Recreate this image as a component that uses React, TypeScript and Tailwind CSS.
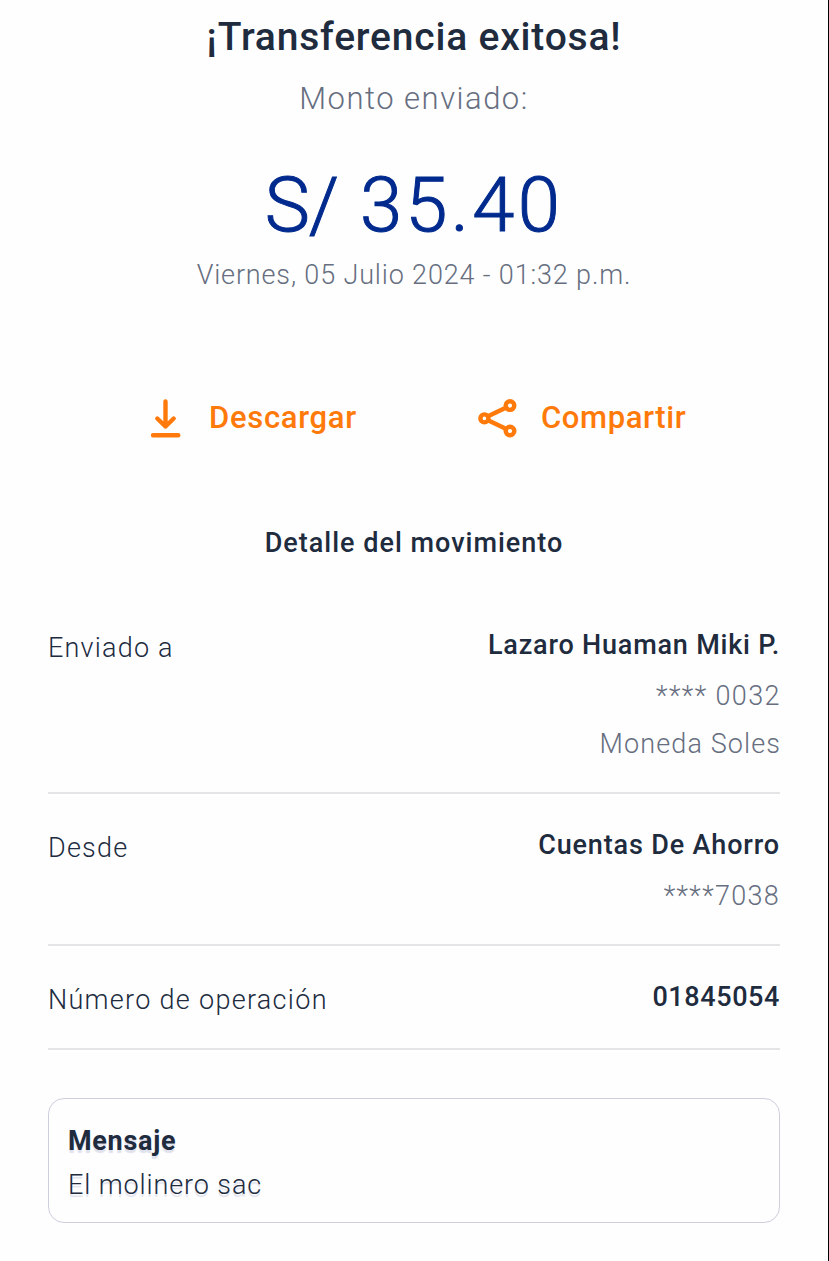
import React from "react";

type Line = { text: string; className: string };

type Row = {
  label: string;
  labelClass: string;
  value: string;
  valueClass: string;
  lines: Line[];
};

const ROWS: Row[] = [
  {
    label: "Enviado a",
    labelClass: "tracking-[1.2px]",
    value: "Lazaro Huaman Miki P.",
    valueClass: "tracking-[0.8px]",
    lines: [
      { text: "**** 0032", className: "tracking-[1.4px] -mr-px" },
      { text: "Moneda Soles", className: "tracking-[1.1px] -mr-px" },
    ],
  },
  {
    label: "Desde",
    labelClass: "tracking-[1.2px]",
    value: "Cuentas De Ahorro",
    valueClass: "tracking-[0.85px]",
    lines: [{ text: "****7038", className: "tracking-[1.3px]" }],
  },
  {
    label: "Número de operación",
    labelClass: "tracking-[1.3px]",
    value: "01845054",
    valueClass: "tracking-[0.6px]",
    lines: [],
  },
];

function DownloadIcon() {
  return (
    <svg width="32" height="40" viewBox="0 0 32 40" fill="none" stroke="currentColor" strokeWidth="4.4" strokeLinecap="round" strokeLinejoin="round">
      <path d="M15.5 3.5v25M7.3 20.5l8.2 8 8.2-8M3 37.2h25.3" />
    </svg>
  );
}

function ShareIcon() {
  return (
    <svg width="40" height="40" viewBox="0 0 40 40" fill="none" stroke="currentColor" strokeWidth="4.4">
      <path d="M9.5 18.5l18.8-9M9.5 22l18.8 9" />
      <circle cx="6.4" cy="20.4" r="4" />
      <circle cx="32" cy="7.6" r="4.3" />
      <circle cx="32" cy="33" r="4.3" />
    </svg>
  );
}

function DetailRow({ row }: { row: Row }) {
  return (
    <div
      className={[
        "flex items-start justify-between border-b-2 border-[#e5e5e7] pt-[33px]",
        row.lines.length > 0 ? "pb-6" : "pb-[30px]",
      ].join(" ")}
    >
      <p className={`pt-[3px] font-light leading-9 ${row.labelClass}`}>{row.label}</p>
      <div className="flex flex-col items-end">
        <p className={`font-medium leading-9 ${row.valueClass}`}>{row.value}</p>
        {row.lines.length > 0 && (
          <div className="mt-[9px] flex flex-col items-end font-light text-[#666e80]">
            {row.lines.map((line) => (
              <p key={line.text} className={`leading-[48px] ${line.className}`}>
                {line.text}
              </p>
            ))}
          </div>
        )}
      </div>
    </div>
  );
}

export default function App() {
  return (
    <main className="h-[1261px] w-[829px] overflow-hidden whitespace-nowrap border-r border-black bg-[#fefefe] px-12 pt-[13px] font-['Roboto',sans-serif] text-[27px] text-[#202b3e]">
      {/* Amount summary */}
      <header className="text-center">
        <h1 className="text-[39px] font-medium leading-[48px] tracking-[0.8px]">¡Transferencia exitosa!</h1>
        <p className="mt-[18px] text-[31px] font-light leading-10 tracking-[1.5px] text-[#666e80]">Monto enviado:</p>
        <p className="mt-[42px] text-[76px] font-light leading-[88px] tracking-[3.3px] text-[#002a8d] [-webkit-text-stroke:1px_#002a8d]">
          <span className="tracking-[-1px]">S/</span> 35.40
        </p>
        <p className="mt-2 font-light leading-9 tracking-[0.85px] text-[#666e80]">Viernes, 05 Julio 2024 - 01:32 p.m.</p>
      </header>

      {/* Actions */}
      <div className="mt-[103px] flex text-[31px] font-medium leading-[44px] text-[#ff7a0a]">
        <button className="ml-[102px] flex w-[328px] items-center gap-[27px]">
          <DownloadIcon />
          <span className="tracking-[0.7px]">Descargar</span>
        </button>
        <button className="flex items-center gap-[23px]">
          <ShareIcon />
          <span className="tracking-[0.6px]">Compartir</span>
        </button>
      </div>

      <h2 className="mt-[85px] text-center font-medium leading-9 tracking-[1px]">Detalle del movimiento</h2>

      {/* Movement details */}
      <section className="mt-[33px]">
        {ROWS.map((row) => (
          <DetailRow key={row.label} row={row} />
        ))}
      </section>

      {/* Message */}
      <section className="mt-12 h-[125px] rounded-2xl border border-[#cdcfdd] px-[19px] pt-5 leading-[44px] [text-shadow:0_3px_1px_#dfe1ed]">
        <p className="font-bold tracking-[0.7px]">Mensaje</p>
        <p className="font-light tracking-[0.9px]">El molinero sac</p>
      </section>
    </main>
  );
}
